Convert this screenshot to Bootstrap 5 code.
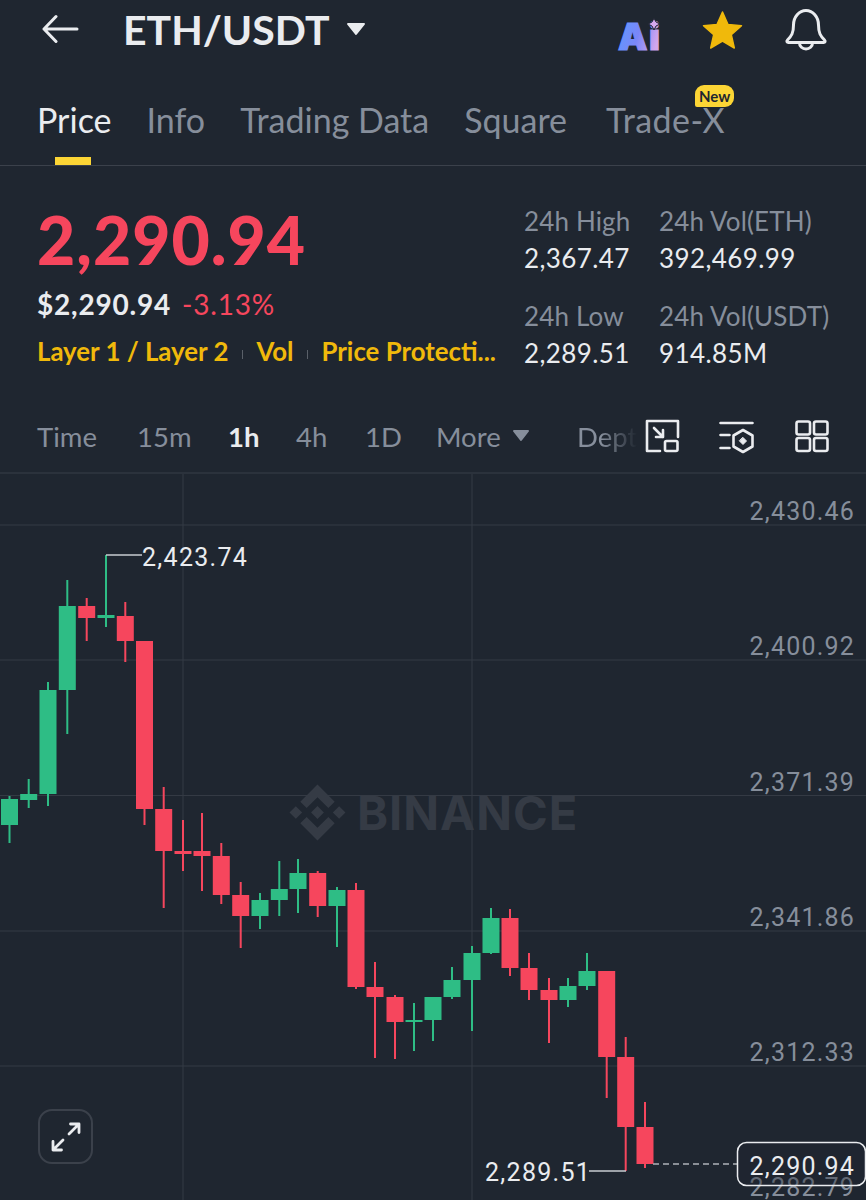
<!DOCTYPE html>
<html lang="en">
<head>
<meta charset="utf-8">
<title>ETH/USDT</title>
<link href="https://cdn.jsdelivr.net/npm/bootstrap@5.3.0/dist/css/bootstrap.min.css" rel="stylesheet">
<style>
html,body{background:#1f2630;margin:0;}
body{width:866px;height:1200px;overflow:hidden;font-family:"Lato","Open Sans",sans-serif;color:#eaecef;}
.hdr{height:58px;padding-left:42px;}
.hdr-title{font-size:41px;font-weight:700;line-height:1;margin-left:43px;margin-right:15px;}
.tab-bar{height:108px;padding:0 0 0 37px;gap:35px;border-bottom:1px solid #3b414b;}
.tab-item{position:relative;height:100%;padding-top:42px;font-size:34px;line-height:40px;color:#868e9b;}
.tab-item.on{color:#eaecef;}
.tab-item.on::after{content:"";position:absolute;left:18px;width:36px;height:8px;bottom:0;background:#fcd535;}
.tab-last{margin-left:4px;letter-spacing:.4px;}
.new-tag{position:absolute;left:89px;top:27px;width:39px;height:22px;border-radius:9px 9px 9px 2px;background:#fcd535;color:#1f2630;font-size:15px;font-weight:700;letter-spacing:0;line-height:22px;text-align:center;}
.stats{height:241px;padding:0 0 0 37px;}
.left-col{width:487px;}
.big-price{font-size:66px;font-weight:900;line-height:1;letter-spacing:1px;color:#f6465d;margin-top:41px;}
.sub-line{font-size:28px;font-weight:700;line-height:32px;letter-spacing:.8px;margin-top:15px;}
.sub-line span{font-weight:400;color:#f6465d;margin-left:11px;}
.tag-line{font-size:25.800px;font-weight:700;color:#f0b90b;line-height:32px;margin-top:15px;white-space:nowrap;}
.tag-sep{display:inline-block;width:1px;height:9px;background:#5a6069;margin:0 13.500px;vertical-align:2px;}
.stat-grid{width:342px;display:grid;grid-template-columns:135px 1fr;align-content:start;row-gap:21px;margin-top:37px;font-size:26px;letter-spacing:.4px;line-height:37px;}
.stat-grid small{display:block;font-size:26px;letter-spacing:.15px;color:#868e9b;}
.iv-row{height:67px;padding-left:37px;border-bottom:2px solid #2b323c;font-size:27.500px;color:#868e9b;position:relative;}
.iv-item{position:absolute;top:12px;line-height:36px;}
.iv-on{color:#eaecef;font-weight:700;}
.iv-fade{width:60px;overflow:hidden;-webkit-mask-image:linear-gradient(90deg,#000 40%,transparent);mask-image:linear-gradient(90deg,#000 40%,transparent);}
.iv-icons{position:absolute;left:640px;top:0;}
.chart-box{position:relative;height:726px;}
.chart-svg{display:block;}
.axis{font-family:"Roboto",sans-serif;font-size:25px;letter-spacing:1.200px;fill:#868e9b;text-anchor:end;}
.pt{font-family:"Roboto",sans-serif;font-size:25px;letter-spacing:1.300px;fill:#eaecef;}
.mark{font-family:"Inter","Liberation Sans",sans-serif;font-size:47px;font-weight:700;letter-spacing:1px;fill:#353b45;}
.expand-btn{position:absolute;left:38px;top:635px;width:55px;height:55px;border:2px solid #3b414b;border-radius:14px;background:transparent;padding:0;}
</style>
</head>
<body>
<header class="hdr d-flex align-items-center">
  <svg width="38" height="30" viewBox="42 14 38 30" fill="none" stroke="#eaecef" stroke-width="3" stroke-linecap="round" stroke-linejoin="round"><path d="M77 29H44M56 16.500 44 29l12 12.500"/></svg>
  <span class="hdr-title">ETH/USDT</span>
  <svg width="22" height="14" viewBox="0 0 22 14"><path d="M3 2h16l-8 10z" fill="#eaecef" stroke="#eaecef" stroke-width="2" stroke-linejoin="round"/></svg>
  <div class="flex-grow-1"></div>
  <svg width="250" height="58" viewBox="616 0 250 58">
    <defs>
      <linearGradient id="aig" x1="0" y1="0" x2="1" y2="0.300"><stop offset="0" stop-color="#5b9bff"/><stop offset="0.550" stop-color="#7a86f8"/><stop offset="1" stop-color="#d3a6ee"/></linearGradient>
    </defs>
    <text x="618" y="50" font-family="Inter,Lato,sans-serif" font-size="37" font-weight="900" letter-spacing="1.500" fill="url(#aig)" stroke="url(#aig)" stroke-width="1.200">Ai</text>
    <path d="M654 18q1 5 6 6q-5 1-6 6q-1-5-6-6q5-1 6-6z" fill="#d6a8ee" stroke="#1f2630" stroke-width="1"/>
    <path d="M722.500 12l5.500 12.500 13.500 1.200-10.200 9 3 13.300-11.800-7-11.800 7 3-13.300-10.200-9 13.500-1.200z" fill="#f0b90b" stroke="#f0b90b" stroke-width="1.500" stroke-linejoin="round"/>
    <path d="M793.500 25a12.500 14.500 0 0 1 25 0c0 8 2 11 6 15 1.200 1.200.6 2.500-1 2.500h-35c-1.600 0-2.200-1.300-1-2.500 4-4 6-7 6-15z" fill="none" stroke="#eaecef" stroke-width="3" stroke-linejoin="round"/>
    <path d="M799.500 43a6.500 6 0 0 0 13 0" fill="none" stroke="#eaecef" stroke-width="3"/>
  </svg>
</header>

<nav class="tab-bar d-flex">
  <div class="tab-item on">Price</div>
  <div class="tab-item">Info</div>
  <div class="tab-item">Trading Data</div>
  <div class="tab-item">Square</div>
  <div class="tab-item tab-last">Trade-X<span class="new-tag">New</span></div>
</nav>

<section class="stats d-flex">
  <div class="left-col">
    <div class="big-price">2,290.94</div>
    <div class="sub-line">$2,290.94<span>-3.13%</span></div>
    <div class="tag-line">Layer 1 / Layer 2<i class="tag-sep"></i>Vol<i class="tag-sep"></i>Price Protecti...</div>
  </div>
  <div class="stat-grid">
    <div><small>24h High</small>2,367.47</div>
    <div><small>24h Vol(ETH)</small>392,469.99</div>
    <div><small>24h Low</small>2,289.51</div>
    <div><small>24h Vol(USDT)</small>914.85M</div>
  </div>
</section>

<section class="iv-row">
  <span class="iv-item" style="left:37px">Time</span>
  <span class="iv-item" style="left:137px">15m</span>
  <span class="iv-item iv-on" style="left:228px">1h</span>
  <span class="iv-item" style="left:296px">4h</span>
  <span class="iv-item" style="left:365px">1D</span>
  <span class="iv-item" style="left:436px">More</span>
  <svg class="iv-item" style="left:511px;top:22px" width="20" height="14" viewBox="0 0 20 14"><path d="M3 2h14l-7 9z" fill="#868e9b" stroke="#868e9b" stroke-width="2" stroke-linejoin="round"/></svg>
  <span class="iv-item iv-fade" style="left:577px">Depth</span>
  <svg class="iv-icons" width="200" height="64" viewBox="640 407 200 64" fill="none" stroke="#eaecef" stroke-width="2.600" stroke-linecap="round" stroke-linejoin="round">
    <path d="M660 451h-13v-30h31v16"/>
    <rect x="665" y="441" width="12.500" height="10" rx="1.500"/>
    <path d="M654 428l9 9M663 437v-7M663 437h-7" />
    <path d="M720.500 423h32M720.500 435h9M720.500 448h9"/>
    <path d="M743 430l9.500 5.500v11l-9.500 5.500-9.500-5.500v-11z"/>
    <path d="M743 437.500l3.500 3.500-3.500 3.500-3.500-3.500z" fill="#eaecef" stroke-width="1"/>
    <rect x="796.500" y="421.500" width="13.500" height="13" rx="2"/><rect x="814" y="421.500" width="13.500" height="13" rx="2"/>
    <rect x="796.500" y="438" width="13.500" height="13" rx="2"/><rect x="814" y="438" width="13.500" height="13" rx="2"/>
  </svg>
</section>

<section class="chart-box">
  <svg class="chart-svg" width="866" height="726" viewBox="0 474 866 726">
    <path d="M0 525H866M0 660H866M0 795.500H866M0 931H866M0 1066H866M183 473V1200M472 473V1200" stroke="#343a44" stroke-width="1" fill="none"/>
    <g fill="#353b45" transform="translate(289.500 784.500) scale(.442)">
      <path d="m38.730 53.200 24.590-24.580 24.600 24.600 14.300-14.310L63.320 0 24.430 38.900l14.300 14.300zM0 63.310l14.300-14.310 14.310 14.310-14.310 14.300zm38.730 10.100 24.590 24.590 24.600-24.600 14.310 14.290-38.900 38.910-38.910-38.880v-.030l14.310-14.280zm59.270-10.100 14.300-14.310 14.310 14.300-14.310 14.320z"/>
      <path d="m77.830 63.300-14.510-14.520-10.730 10.730-1.240 1.230-2.540 2.540 14.510 14.500 14.510-14.470z"/>
    </g>
    <text class="mark" x="357" y="830">BINANCE</text>

    <path fill="none" stroke="#2ebd85" stroke-width="2" d="M9.500 796V843M28.700 779V808M48 682V806M67.300 580V734M106 555V627M260 893V929M279.300 861V916M298 859V913M337 887V947M414 1003V1051M433 997V1041M452 967V999M472 946V1031M491 908V954M568 978V1007M587 953V990"/>
    <path fill="#2ebd85" d="M1 799h17v26h-17zM20.200 794h17v6h-17zM39.500 690h17v104h-17zM58.800 606h17v84h-17zM97.500 615h17v3h-17zM251.500 900h17v16h-17zM270.800 889h17v11h-17zM289.500 873h17v16h-17zM328.500 890h17v16h-17zM405.500 1020h17v2h-17zM424.500 997h17v23h-17zM443.500 980h17v17h-17zM463.500 953h17v27h-17zM482.500 918h17v35h-17zM559.500 986h17v14h-17zM578.500 971h17v15h-17z"/>
    <path fill="none" stroke="#f6465d" stroke-width="2" d="M86.700 598V641M125.300 602V662M144.500 641V825M163.700 787V908M183 820V871M202 813V891M221.300 843V904M240.700 882V948M317.700 871V917M356 883V989M375 962V1058M395 995V1059M510 909V976M529 953V1000M549 978V1043M606.700 971V1098M625.700 1037V1171M645 1102V1168"/>
    <path fill="#f6465d" d="M78.200 606h17v12h-17zM116.800 616h17v25h-17zM136 641h17v168h-17zM155.200 809h17v42h-17zM174.500 851h17v3h-17zM193.500 851h17v5h-17zM212.800 856h17v39h-17zM232.200 895h17v21h-17zM309.200 873h17v33h-17zM347.500 890h17v97h-17zM366.500 987h17v10h-17zM386.500 997h17v25h-17zM501.500 918h17v50h-17zM520.500 968h17v22h-17zM540.500 990h17v10h-17zM598.200 971h17v86h-17zM617.200 1057h17v70h-17zM636.500 1127h17v37h-17z"/>

    <path d="M106 555H142" stroke="#c9ccd1" stroke-width="1.500" fill="none"/>
    <path d="M589 1171H626" stroke="#c9ccd1" stroke-width="1.500" fill="none"/>
    <path d="M653 1164H737" stroke="#aeb2b8" stroke-width="1.500" stroke-dasharray="6 4" fill="none"/>

    <text class="axis" x="855" y="520">2,430.46</text>
    <text class="axis" x="855" y="655">2,400.92</text>
    <text class="axis" x="855" y="791">2,371.39</text>
    <text class="axis" x="855" y="926">2,341.86</text>
    <text class="axis" x="855" y="1061">2,312.33</text>
    <text class="axis" x="855" y="1196">2,282.79</text>
    <rect x="737.500" y="1142.500" width="128" height="43" rx="9" fill="#1f2630" fill-opacity=".35" stroke="#eaecef" stroke-width="1.500"/>
    <text class="axis" x="855" y="1175" style="fill:#eaecef">2,290.94</text>
    <text class="pt" x="142" y="566">2,423.74</text>
    <text class="pt" x="485" y="1181">2,289.51</text>
  </svg>
  <button type="button" class="expand-btn d-flex align-items-center justify-content-center" aria-label="Expand">
    <svg width="36" height="36" viewBox="0 0 36 36" fill="none" stroke="#eaecef" stroke-width="2.800" stroke-linecap="round" stroke-linejoin="round"><path d="M21 15l10-10M22.500 5H31v8.500M15 21L5 31M5 22.500V31h8.500"/></svg>
  </button>
</section>
</body>
</html>
